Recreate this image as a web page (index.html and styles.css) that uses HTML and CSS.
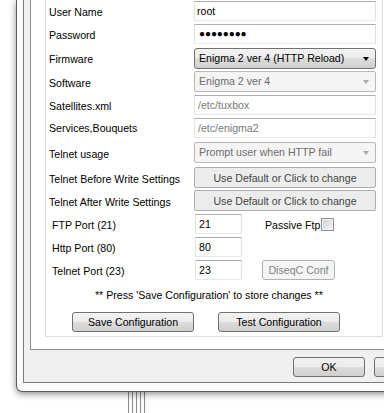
FILE: index.html
```html
<!DOCTYPE html>
<html lang="en">
<head>
  <meta charset="UTF-8">
  <title>Box Settings</title>
  <link rel="stylesheet" href="styles.css">
</head>
<body>
  <div class="window">
    <div class="client">
      <div class="tabpage">
        <div class="group">
          <div class="row gap1">
            <span class="lbl">User Name</span>
            <div class="text">root</div>
          </div>
          <div class="row gap3">
            <span class="lbl">Password</span>
            <div class="text dots">&#9679;&#9679;&#9679;&#9679;&#9679;&#9679;&#9679;&#9679;</div>
          </div>
          <div class="row gap4 h21">
            <span class="lbl up">Firmware</span>
            <div class="combo">Enigma 2 ver 4 (HTTP Reload)<span class="arrow"></span></div>
          </div>
          <div class="row gap2 h21">
            <span class="lbl">Software</span>
            <div class="combo off">Enigma 2 ver 4<span class="arrow"></span></div>
          </div>
          <div class="row gap3">
            <span class="lbl">Satellites.xml</span>
            <div class="text ro">/etc/tuxbox</div>
          </div>
          <div class="row gap3">
            <span class="lbl up">Services,Bouquets</span>
            <div class="text ro">/etc/enigma2</div>
          </div>
          <div class="row gap4 h21">
            <span class="lbl">Telnet usage</span>
            <div class="combo off">Prompt user when HTTP fail<span class="arrow"></span></div>
          </div>
          <div class="row gap4 h21">
            <span class="lbl">Telnet Before Write Settings</span>
            <button class="flat">Use Default or Click to change</button>
          </div>
          <div class="row gap2 h21">
            <span class="lbl">Telnet After Write Settings</span>
            <button class="flat">Use Default or Click to change</button>
          </div>
          <div class="row gap3">
            <span class="lbl port">FTP Port (21)</span>
            <div class="text short">21</div>
            <span class="passive">Passive Ftp</span>
            <span class="check"></span>
          </div>
          <div class="row gap3">
            <span class="lbl port">Http Port (80)</span>
            <div class="text short">80</div>
          </div>
          <div class="row gap3">
            <span class="lbl port">Telnet Port (23)</span>
            <div class="text short">23</div>
            <button class="btn disabled diseqc">DiseqC Conf</button>
          </div>

          <p class="note">** Press 'Save Configuration' to store changes **</p>

          <div class="actions">
            <button class="btn wide">Save Configuration</button>
            <button class="btn wide">Test Configuration</button>
          </div>
        </div>
      </div>

      <div class="footer">
        <button class="btn dlg">OK</button>
        <button class="btn dlg"></button>
      </div>
    </div>
  </div>
  <div class="behind"></div>
</body>
</html>
```

FILE: styles.css
```css
* {
  box-sizing: border-box;
}

html, body {
  margin: 0;
  background: #fff;
}

body {
  width: 384px;
  height: 413px;
  overflow: hidden;
  font-family: "Liberation Sans", Arial, sans-serif;
  font-size: 10.6px;
  color: #000;
}

/* window chrome */
.window {
  position: relative;
  z-index: 1;
  width: 420px;
  margin-left: 16px;
  padding: 0 6px 8px 6px;
  background: #fbfbfb;
  border: 1px solid #5c5c5c;
  border-top: none;
  border-radius: 0 0 0 6px;
  box-shadow: 0 2px 7px rgba(0, 0, 0, 0.45);
}

.client {
  background: #f0f0f0;
  border-left: 1px solid #7a7a7a;
  border-bottom: 1px solid #7a7a7a;
  padding-left: 6px;
}

.tabpage {
  background: #fff;
  border: 1px solid #898c95;
  border-top: none;
  padding: 0 0 12px 14px;
}

.group {
  width: 338px;
  border: 1px solid #d5dfe5;
  border-top: none;
  padding: 1px 0 4px 3px;
}

/* form rows */
.row {
  display: flex;
  align-items: center;
  height: 20px;
}

.row.h21 { height: 21px; }
.gap1 { margin-top: 0; }
.gap2 { margin-top: 2px; }
.gap3 { margin-top: 3px; }
.gap4 { margin-top: 4px; }

.lbl {
  width: 145px;
  flex-shrink: 0;
  padding-top: 2px;
}

.lbl.up {
  padding-top: 0;
}

.lbl.port {
  padding-left: 3px;
  width: 146px;
}

.text {
  width: 182px;
  height: 20px;
  line-height: 18px;
  padding-left: 2px;
  background: #fff;
  border: 1px solid;
  border-color: #abadb3 #dbdfe6 #e3e9ef #e2e3ea;
}

.text.ro {
  color: #7a7a7a;
  padding-left: 3px;
}

.text.dots {
  font-size: 10px;
  letter-spacing: -0.1px;
  padding-left: 4px;
}

.text.short {
  width: 47px;
  padding-left: 3px;
}

.combo {
  position: relative;
  width: 182px;
  height: 21px;
  line-height: 19px;
  padding-left: 4px;
  border: 1px solid #707070;
  border-radius: 3px;
  background: linear-gradient(#f2f2f2, #ebebeb 50%, #dddddd 50%, #cfcfcf);
}

.combo.off {
  color: #6d6d6d;
  border-color: #b8b8b8;
  background: #f4f4f4;
  border-radius: 2px;
}

.arrow {
  position: absolute;
  right: 6px;
  top: 8px;
  border-left: 3.5px solid transparent;
  border-right: 3.5px solid transparent;
  border-top: 4px solid #000;
}

.combo.off .arrow {
  border-top-color: #a8a8a8;
}

button {
  font-family: inherit;
  font-size: inherit;
  padding: 0;
  margin: 0;
}

.flat {
  width: 182px;
  height: 21px;
  color: #444;
  background: #ececec;
  border: 1px solid #adadad;
  border-radius: 2px;
}

.btn {
  height: 20px;
  color: #000;
  border: 1px solid #707070;
  border-radius: 3px;
  background: linear-gradient(#f2f2f2, #ebebeb 50%, #dddddd 50%, #cfcfcf);
}

.btn.disabled {
  color: #838383;
  border-color: #adb2b5;
  background: #f4f4f4;
}

.passive {
  margin-left: 23px;
  padding-top: 2px;
}

.check {
  width: 13px;
  height: 13px;
  margin-left: 1px;
  border: 1px solid #8e8f8f;
  background: linear-gradient(135deg, #cbcfd5, #f6f6f6);
  box-shadow: inset 0 0 0 1px #f4f4f4;
}

.diseqc {
  width: 73px;
  margin-left: 20px;
}

.note {
  margin: 8px 0 0;
  padding-left: 46px;
  line-height: 14px;
}

.actions {
  display: flex;
  gap: 24px;
  margin-top: 10px;
  padding-left: 23px;
}

.btn.wide {
  width: 122px;
}

/* dialog buttons */
.footer {
  display: flex;
  gap: 9px;
  height: 32px;
  padding: 7px 0 0 263px;
}

.btn.dlg {
  width: 72px;
  flex-shrink: 0;
}

/* window behind */
.behind {
  width: 19px;
  height: 24px;
  margin: -3px 0 0 128px;
  background: repeating-linear-gradient(90deg, #8a8a8a 0 1px, #fafafa 1px 4px);
}
```
